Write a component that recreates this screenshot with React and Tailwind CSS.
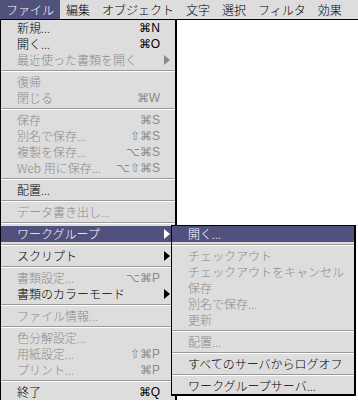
import React from 'react';

const jp = "font-['Noto_Sans_CJK_JP','Noto_Sans',sans-serif]";
const sym = "font-['Liberation_Sans','DejaVu_Sans',sans-serif]";

const menuBar = ['ファイル', '編集', 'オブジェクト', '文字', '選択', 'フィルタ', '効果'];

const fileMenu = [
  { label: '新規...', sc: '⌘N' },
  { label: '開く...', sc: '⌘O' },
  { label: '最近使った書類を開く', dis: true, sub: true },
  'sep',
  { label: '復帰', dis: true },
  { label: '閉じる', dis: true, sc: '⌘W' },
  'sep',
  { label: '保存', dis: true, sc: '⌘S' },
  { label: '別名で保存...', dis: true, sc: '⇧⌘S' },
  { label: '複製を保存...', dis: true, sc: '⌥⌘S' },
  { label: 'Web 用に保存...', dis: true, sc: '⌥⇧⌘S' },
  'sep',
  { label: '配置...' },
  'sep',
  { label: 'データ書き出し...', dis: true },
  'sep',
  { label: 'ワークグループ', sub: true, active: true },
  'sep',
  { label: 'スクリプト', sub: true },
  'sep',
  { label: '書類設定...', dis: true, sc: '⌥⌘P' },
  { label: '書類のカラーモード', sub: true },
  'sep',
  { label: 'ファイル情報...', dis: true },
  'sep',
  { label: '色分解設定...', dis: true },
  { label: '用紙設定...', dis: true, sc: '⇧⌘P' },
  { label: 'プリント...', dis: true, sc: '⌘P' },
  'sep',
  { label: '終了', sc: '⌘Q' },
];

const groupMenu = [
  { label: '開く...', active: true },
  'sep',
  { label: 'チェックアウト', dis: true },
  { label: 'チェックアウトをキャンセル', dis: true },
  { label: '保存', dis: true },
  { label: '別名で保存...', dis: true },
  { label: '更新', dis: true },
  'sep',
  { label: '配置...', dis: true },
  'sep',
  { label: 'すべてのサーバからログオフ' },
  'sep',
  { label: 'ワークグループサーバ...' },
];

function Arrow({ color }) {
  return (
    <svg width="6" height="10" viewBox="0 0 6 10" className="block">
      <polygon points="0,0 6,5 0,10" fill={color} />
    </svg>
  );
}

function Separator() {
  return (
    <div className="h-[6px] flex flex-col justify-center">
      <div className="h-px bg-[#9a9a9a]" />
      <div className="h-px bg-white" />
    </div>
  );
}

function Row({ item, withShortcuts }) {
  const color = item.active
    ? 'text-white bg-[#51517e]'
    : item.dis
    ? 'text-[#8a8a8a]'
    : 'text-black';
  const arrowColor = item.active ? '#ffffff' : item.dis ? '#8a8a8a' : '#000000';
  return (
    <div className={`h-[16px] flex items-center pl-[16px] leading-[16px] ${color}`}>
      <span className="flex-1 whitespace-nowrap">{item.label}</span>
      {withShortcuts && (
        <>
          <span className={`${sym} text-[12px] whitespace-nowrap`}>{item.sc}</span>
          <span className="w-[15px] h-[16px] flex items-center pl-[4px]">
            {item.sub && <Arrow color={arrowColor} />}
          </span>
        </>
      )}
    </div>
  );
}

export default function App() {
  return (
    <div className={`w-[358px] h-[402px] bg-white relative overflow-hidden text-[12px] font-light ${jp}`}>
      {/* menu bar */}
      <div className="h-[20px] flex bg-[#dddddd] border-b border-black">
        {menuBar.map((m, i) => (
          <div
            key={m}
            className={`h-[19px] px-[6px] leading-[19px] whitespace-nowrap ${
              i === 0 ? 'bg-[#51517e] text-white' : 'text-black'
            }`}
          >
            {m}
          </div>
        ))}
      </div>

      {/* file menu */}
      <div className="w-[177px] bg-[#dddddd] border-l border-r-2 border-black">
        {fileMenu.map((item, i) =>
          item === 'sep' ? <Separator key={i} /> : <Row key={i} item={item} withShortcuts />
        )}
      </div>

      {/* workgroup submenu */}
      <div className="absolute left-[171px] top-[225px] w-[185px] bg-[#dddddd] border-t border-l border-r-2 border-b-2 border-black">
        {groupMenu.map((item, i) =>
          item === 'sep' ? <Separator key={i} /> : <Row key={i} item={item} />
        )}
      </div>
    </div>
  );
}
